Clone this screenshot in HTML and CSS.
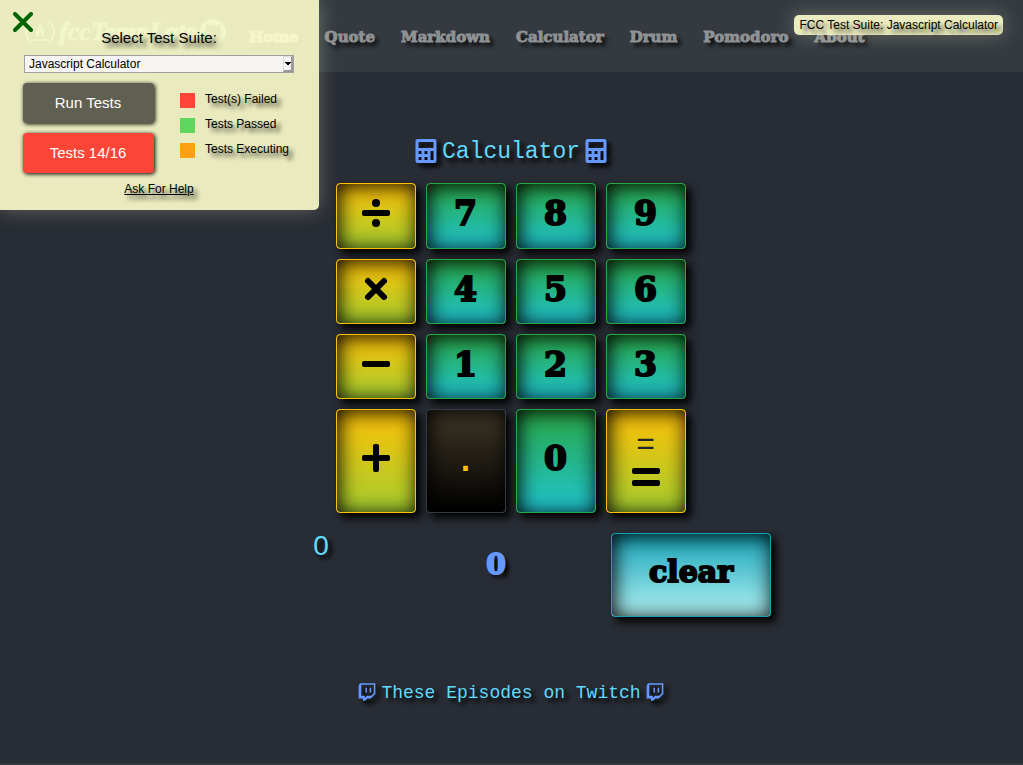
FILE: index.html
```html
<!DOCTYPE html>
<html lang="en">
<head>
<meta charset="utf-8">
<title>Calculator</title>
<link rel="stylesheet" href="styles.css">
</head>
<body>
<svg class="symbols" aria-hidden="true">
  <symbol id="calc" viewBox="0 0 448 512"><path fill-rule="evenodd" d="M48 0H400Q448 0 448 48V464Q448 512 400 512H48Q0 512 0 464V48Q0 0 48 0ZM64 64V192H384V64ZM64 256V320H128V256ZM192 256V320H256V256ZM320 256V448H384V256ZM64 384V448H128V384ZM192 384V448H256V384Z"/></symbol>
  <symbol id="twitch" viewBox="0 0 448 512"><path d="M40 32L10 109v314h107v57h60l57-57h87l117-117V32H40zm358 254l-67 67H224l-57 57v-57H77V72h321v214zM331 149v117h-40V149h40zm-107 0v117h-40V149h40z"/></symbol>
</svg>

<header class="navbar">
  <a class="brand" href="#">
    <svg class="brand-camp" viewBox="0 0 32 24"><path d="M6 2Q-2 12 6 22M26 2Q34 12 26 22M10 20H22" fill="none" stroke="currentColor" stroke-width="2" stroke-linecap="round"/><path d="M15 3C21 7 17 9 20 10Q22 14 18 17Q18 13 16 12Q15 14 14 17Q9 14 13 9Q16 7 15 3Z" fill="currentColor"/></svg>
    <span>fccTempLate</span>
    <svg class="brand-hub" viewBox="0 0 16 16"><path fill="currentColor" d="M8 0C3.58 0 0 3.58 0 8c0 3.54 2.29 6.53 5.47 7.59.4.07.55-.17.55-.38 0-.19-.01-.82-.01-1.49-2.01.37-2.53-.49-2.69-.94-.09-.23-.48-.94-.82-1.13-.28-.15-.68-.52-.01-.53.63-.01 1.08.58 1.23.82.72 1.21 1.87.87 2.33.66.07-.52.28-.87.51-1.07-1.78-.2-3.64-.89-3.64-3.95 0-.87.31-1.59.82-2.15-.08-.2-.36-1.02.08-2.12 0 0 .67-.21 2.2.82.64-.18 1.32-.27 2-.27.68 0 1.36.09 2 .27 1.53-1.04 2.2-.82 2.2-.82.44 1.1.16 1.92.08 2.12.51.56.82 1.27.82 2.15 0 3.07-1.87 3.75-3.65 3.95.29.25.54.73.54 1.48 0 1.07-.01 1.93-.01 2.2 0 .21.15.46.55.38A8.013 8.013 0 0016 8c0-4.42-3.58-8-8-8z"/></svg>
  </a>
  <nav class="links">
    <a class="active" href="#">Home</a>
    <a href="#">Quote</a>
    <a href="#">Markdown</a>
    <a href="#">Calculator</a>
    <a href="#">Drum</a>
    <a href="#">Pomodoro</a>
    <a href="#">About</a>
  </nav>
</header>

<main class="page">
  <h1 class="title"><svg class="title-icon"><use href="#calc"/></svg>Calculator<svg class="title-icon"><use href="#calc"/></svg></h1>

  <div class="keys">
    <button class="key op" aria-label="divide"><svg class="sign" viewBox="0 0 28 28"><rect y="11" width="28" height="6" rx="2"/><circle cx="14" cy="4" r="4"/><circle cx="14" cy="24" r="4"/></svg></button>
    <button class="key num">7</button>
    <button class="key num">8</button>
    <button class="key num">9</button>
    <button class="key op" aria-label="multiply"><svg class="sign" viewBox="0 0 28 28"><path d="M6 6L22 22M22 6L6 22" stroke="currentColor" stroke-width="6" stroke-linecap="round"/></svg></button>
    <button class="key num">4</button>
    <button class="key num">5</button>
    <button class="key num">6</button>
    <button class="key op" aria-label="subtract"><svg class="sign" viewBox="0 0 28 28"><rect y="11" width="28" height="6" rx="2"/></svg></button>
    <button class="key num">1</button>
    <button class="key num">2</button>
    <button class="key num">3</button>
    <button class="key op" aria-label="add"><svg class="sign" viewBox="0 0 28 28"><rect y="11" width="28" height="6" rx="2"/><rect x="11" width="6" height="28" rx="2"/></svg></button>
    <button class="key dot">.</button>
    <button class="key num">0</button>
    <button class="key op equals"><span>=</span><svg class="sign" viewBox="0 0 28 28"><rect y="5" width="28" height="6" rx="2"/><rect y="17" width="28" height="6" rx="2"/></svg></button>
  </div>

  <div class="readout">
    <div class="formula">0</div>
    <div class="result">0</div>
    <button class="key clear">clear</button>
  </div>

  <a class="episodes" href="#"><svg class="episodes-icon"><use href="#twitch"/></svg>These Episodes on Twitch<svg class="episodes-icon"><use href="#twitch"/></svg></a>
</main>

<footer class="footer"></footer>

<aside class="suite">
  <button class="close" aria-label="close"><svg viewBox="0 0 20 20"><path d="M2 2L18 18M18 2L2 18" fill="none" stroke="currentColor" stroke-width="4" stroke-linecap="round"/></svg></button>
  <label class="suite-title" for="suite">Select Test Suite:</label>
  <div class="picker">
    <select id="suite"><option>Javascript Calculator</option></select>
    <span class="picker-arrow"></span>
  </div>
  <div class="suite-body">
    <div class="suite-actions">
      <button class="run">Run Tests</button>
      <button class="run failed">Tests 14/16</button>
    </div>
    <ul class="legend">
      <li><i class="swatch red"></i><span>Test(s) Failed</span></li>
      <li><i class="swatch green"></i><span>Tests Passed</span></li>
      <li><i class="swatch orange"></i><span>Tests Executing</span></li>
    </ul>
  </div>
  <a class="help" href="#">Ask For Help</a>
</aside>
<div class="badge">FCC Test Suite: Javascript Calculator</div>
</body>
</html>
```

FILE: styles.css
```css
* { box-sizing: border-box; }

body {
  margin: 0;
  min-height: 100vh;
  display: flex;
  flex-direction: column;
  background: #282c34;
  color: #61dafb;
  font-family: "Liberation Sans", Arial, sans-serif;
}

a { color: inherit; text-decoration: none; }
button { font: inherit; margin: 0; cursor: pointer; }
.symbols { position: absolute; width: 0; height: 0; }

.navbar {
  height: 72px;
  padding: 2px 24px 0;
  display: flex;
  align-items: center;
  gap: 23px;
  background: #343a40;
}
.brand {
  width: 202px;
  display: flex;
  align-items: center;
  justify-content: space-between;
  padding-bottom: 10px;
  color: #a0ffff;
  font: italic bold 26px "Liberation Serif", serif;
}
.brand span { -webkit-text-stroke: 1px currentColor; }
.brand-camp { width: 32px; height: 24px; }
.brand-hub { width: 26px; height: 26px; }
.links {
  display: flex;
  gap: 26px;
  color: #8f9193;
  font: bold 15px/24px "DejaVu Serif", serif;
  -webkit-text-stroke: 1px currentColor;
  text-shadow: 4px 4px 4px #000;
}
.active { color: #fff; }

.page {
  flex: 1;
  display: flex;
  flex-direction: column;
  align-items: center;
  padding: 64px 1px 0 0;
}
.title {
  margin: 0 0 15px;
  display: flex;
  align-items: center;
  gap: 5px;
  font: 23px/32px "Liberation Mono", monospace;
  text-shadow: 4px 4px 4px #000;
}
.title-icon, .episodes-icon {
  fill: #6699ff;
  filter: drop-shadow(4px 4px 2px #000);
  margin-bottom: 2px;
}
.title-icon { width: 22px; height: 24px; }

.keys {
  display: grid;
  grid-template-columns: repeat(4, 80px);
  grid-template-rows: 66px 65px 65px 104px;
  gap: 10px;
  margin-right: 1px;
}
.key {
  display: flex;
  flex-direction: column;
  align-items: center;
  justify-content: center;
  padding: 0 0 6px;
  border: 1px solid;
  border-radius: 4px;
  color: #000;
  font: bold 33px/40px "DejaVu Serif", serif;
  -webkit-text-stroke: 2px currentColor;
  box-shadow: 5px 5px 8px #000, inset 2px 2px 20px #000;
}
.op {
  border-color: #ffc107;
  background: linear-gradient(#ffc107, #9acd32 110%);
}
.num {
  padding-bottom: 4px;
  border-color: #28a745;
  background: linear-gradient(#28a745, #20c4d0);
}
.dot {
  border-color: #343a40;
  background: linear-gradient(#403828, #000);
  color: #ffc107;
  font: 48px/40px "Liberation Sans", Arial, sans-serif;
  -webkit-text-stroke: 0;
  padding-bottom: 12px;
}
.sign {
  width: 28px;
  height: 28px;
  fill: currentColor;
}
.equals { padding: 0 0 8px; }
.equals span {
  color: #212529;
  font: 32px/40px "Liberation Sans", Arial, sans-serif;
  -webkit-text-stroke: 0;
}

.readout {
  display: grid;
  grid-template-columns: 170px 180px 210px;
  justify-items: center;
  align-items: start;
  margin-top: 20px;
  padding-left: 10px;
  text-shadow: 4px 4px 4px #000;
}
.formula { font-size: 28px; line-height: 26px; }
.result {
  padding-top: 13px;
  color: #6699ff;
  font: bold 28px/38px "DejaVu Serif", serif;
  -webkit-text-stroke: 2px currentColor;
}
.clear {
  width: 160px;
  height: 84px;
  border-color: #17a2b8;
  background: linear-gradient(#17a2b8, #b0f2f2);
  font-size: 30px;
}

.episodes {
  display: flex;
  align-items: center;
  gap: 5px;
  margin-top: 64px;
  font: 18px/24px "Liberation Mono", monospace;
  text-shadow: 4px 4px 4px #000;
}
.episodes-icon { width: 18px; height: 20px; }

.footer { height: 2px; background: #343a40; }

.suite {
  position: absolute;
  top: 0;
  left: 0;
  width: 319px;
  height: 210px;
  padding: 28px 25px 0 24px;
  display: flex;
  flex-direction: column;
  align-items: center;
  border-radius: 0 0 5px 0;
  background: rgba(245, 246, 198, .94);
  box-shadow: 0 0 20px rgba(245, 246, 198, .3);
  color: #000;
  font-size: 12px;
  text-shadow: 4px 4px 4px rgba(0, 0, 0, .7);
}
.close {
  position: absolute;
  top: 12px;
  left: 13px;
  width: 20px;
  height: 20px;
  padding: 0;
  border: 0;
  background: none;
  color: #006400;
}
.suite-title { font-size: 15px; line-height: 20px; }
.picker {
  position: relative;
  align-self: stretch;
  margin-top: 7px;
}
.picker select {
  display: block;
  width: 100%;
  height: 18px;
  padding: 0 4px;
  appearance: none;
  border: 1px solid #a0a0a0;
  border-radius: 0;
  background: #f6f5f3;
  color: #000;
  font: 12px "Liberation Sans", Arial, sans-serif;
}
.picker-arrow {
  position: absolute;
  top: 1px;
  right: 1px;
  width: 10px;
  height: 16px;
  border: 1px solid #ddd;
  border-right: 2px solid #999;
  border-bottom: 2px solid #999;
  background: linear-gradient(#000, #000) 50% 5px / 6px 1px no-repeat,
    linear-gradient(#000, #000) 50% 6px / 4px 1px no-repeat,
    linear-gradient(#000, #000) 50% 7px / 2px 1px no-repeat, #f6f5f3;
  pointer-events: none;
}
.suite-body {
  align-self: stretch;
  display: flex;
  gap: 26px;
  padding-top: 10px;
  margin-left: -1px;
}
.suite-actions { display: flex; flex-direction: column; gap: 10px; }
.run {
  width: 131px;
  height: 40px;
  padding: 0 1px 2px 0;
  border: 0;
  border-radius: 4px;
  background: #606052;
  color: #fff;
  font-size: 15px;
  box-shadow: 1px 1px 4px #000;
}
.failed { background: #fb4537; }
.legend {
  display: flex;
  flex-direction: column;
  gap: 10px;
  margin: 0;
  padding: 10px 0 0;
  list-style: none;
  line-height: 13px;
  white-space: nowrap;
}
.legend li { display: flex; gap: 10px; height: 15px; }
.swatch { width: 15px; height: 15px; }
.red { background: #ff4538; }
.green { background: #5fd75f; }
.orange { background: #ffa013; }
.help { margin-top: 9px; line-height: 14px; text-decoration: underline; }

.badge {
  position: absolute;
  top: 15px;
  right: 20px;
  padding: 0 5px;
  border-radius: 5px;
  background: rgba(245, 246, 198, .94);
  box-shadow: 0 0 20px rgba(245, 246, 198, .3);
  color: #000;
  font-size: 12px;
  line-height: 20px;
  text-shadow: 4px 4px 4px rgba(0, 0, 0, .7);
}
```
